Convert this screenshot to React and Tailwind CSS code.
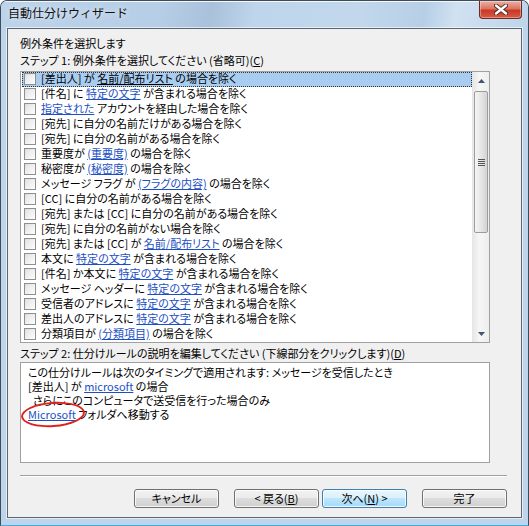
import React from 'react';

const font = '[font-family:"Noto_Sans_CJK_JP","Noto_Sans",sans-serif] [font-feature-settings:"palt"]';

// exception rules shown in the list
const rules = [
  ['[差出人] が ', { link: '名前/配布リスト' }, ' の場合を除く'],
  ['[件名] に ', { link: '特定の文字' }, ' が含まれる場合を除く'],
  [{ link: '指定された' }, ' アカウントを経由した場合を除く'],
  ['[宛先] に自分の名前だけがある場合を除く'],
  ['[宛先] に自分の名前がある場合を除く'],
  ['重要度が ', { link: '(重要度)' }, ' の場合を除く'],
  ['秘密度が ', { link: '(秘密度)' }, ' の場合を除く'],
  ['メッセージ フラグ が ', { link: '(フラグの内容)' }, ' の場合を除く'],
  ['[CC] に自分の名前がある場合を除く'],
  ['[宛先] または [CC] に自分の名前がある場合を除く'],
  ['[宛先] に自分の名前がない場合を除く'],
  ['[宛先] または [CC] が ', { link: '名前/配布リスト' }, ' の場合を除く'],
  ['本文に ', { link: '特定の文字' }, ' が含まれる場合を除く'],
  ['[件名] か本文に ', { link: '特定の文字' }, ' が含まれる場合を除く'],
  ['メッセージ ヘッダーに ', { link: '特定の文字' }, ' が含まれる場合を除く'],
  ['受信者のアドレスに ', { link: '特定の文字' }, ' が含まれる場合を除く'],
  ['差出人のアドレスに ', { link: '特定の文字' }, ' が含まれる場合を除く'],
  ['分類項目が ', { link: '(分類項目)' }, ' の場合を除く'],
];

const Checkbox = () => (
  <span className="mt-[1px] ml-[2px] h-[12px] w-[12px] shrink-0 border border-[#8e8f8f] bg-[linear-gradient(135deg,#dcdcdc,#f4f4f4_60%,#ffffff)] p-[1px]">
    <span className="block h-full w-full bg-[linear-gradient(135deg,#e6e6e6,#fafafa)]" />
  </span>
);

const RuleRow = ({ parts, selected }) => (
  <div className="flex h-[15px] items-start">
    <div
      className={`ml-[1px] flex h-[15px] w-[450px] items-start ${
        selected ? 'bg-[#a9cdf1] outline outline-1 -outline-offset-1 outline-dotted outline-[#333]' : ''
      }`}
    >
      <Checkbox />
      <span className="ml-[5px] -mt-[1px] whitespace-pre text-[11px] leading-[15px] text-black">
        {parts.map((p, i) =>
          typeof p === 'string' ? (
            <span key={i}>{p}</span>
          ) : (
            <span key={i} className={`underline ${selected ? 'text-black' : 'text-[#1c4fc4]'}`}>
              {p.link}
            </span>
          )
        )}
      </span>
    </div>
  </div>
);

const Arrow = ({ down }) => (
  <svg width="7" height="4" viewBox="0 0 7 4">
    <path d={down ? 'M0 0 H7 L3.5 4 Z' : 'M0 4 H7 L3.5 0 Z'} fill="#44546a" />
  </svg>
);

const Scrollbar = () => (
  <div className="flex w-[17px] flex-col border-l border-[#e6e6e6] bg-[linear-gradient(90deg,#e8e8e8,#f6f6f6_40%,#eeeeee)]">
    <div className="flex h-[18px] items-center justify-center">
      <Arrow />
    </div>
    <div className="mx-[1px] mt-[1px] flex h-[142px] items-center justify-center rounded-[2px] border border-[#9c9c9c] bg-[linear-gradient(90deg,#f5f5f5,#e6e6e6_50%,#d3d3d3)]">
      <div className="flex flex-col gap-[1px]">
        {[0, 1, 2, 3].map((i) => (
          <div key={i} className="h-[1px] w-[7px] bg-[#555]" />
        ))}
      </div>
    </div>
    <div className="flex-1" />
    <div className="flex h-[17px] items-center justify-center">
      <Arrow down />
    </div>
  </div>
);

const Button = ({ children, primary }) => (
  <button
    className={`flex h-[19px] w-[85px] items-center justify-center rounded-[3px] border text-[11px] leading-none text-black shadow-[inset_0_0_0_1px_rgba(255,255,255,0.8)] ${
      primary
        ? 'border-[#3c7fb1] bg-[linear-gradient(180deg,#eaf6fd,#d9f0fc_50%,#bee6fd_50%,#a7d9f5)]'
        : 'border-[#707070] bg-[linear-gradient(180deg,#f2f2f2,#ebebeb_50%,#dddddd_50%,#cfcfcf)]'
    }`}
  >
    {children}
  </button>
);

const CloseIcon = () => (
  <svg width="14" height="11" viewBox="0 0 14 11">
    <path d="M2 1.5 L12 9.5 M12 1.5 L2 9.5" stroke="#4a2a24" strokeWidth="4.2" strokeLinecap="round" />
    <path d="M2 1.5 L12 9.5 M12 1.5 L2 9.5" stroke="#ffffff" strokeWidth="2.4" strokeLinecap="round" />
  </svg>
);

const App = () => {
  return (
    <div
      className={`${font} flex h-[526px] w-[529px] flex-col overflow-hidden rounded-t-[7px] border border-[#3e4c5a] border-b-[#3bb0de] bg-[#bed4ea] text-black`}
    >
      {/* title bar */}
      <div className="flex h-[27px] items-start border-t border-[#f4f8fc] bg-[linear-gradient(100deg,#bcd3ea_0%,#b6cee6_30%,#a9c1da_40%,#bed5eb_48%,#c2d7ec_68%,#b7cfe6_80%,#d0e1f1_86%,#bed4ea_100%)]">
        <span className="ml-[7px] mt-[3px] text-[12px] leading-[16px] text-[#111] [font-feature-settings:normal] [text-shadow:0_0_6px_rgba(255,255,255,0.9)]">
          自動仕分けウィザード
        </span>
        <div className="ml-auto mr-[6px] -mt-[1px] flex h-[18px] w-[43px] items-center justify-center rounded-b-[4px] border border-t-0 border-[#6e2a22] bg-[linear-gradient(180deg,#eeb0a2,#dc7462_45%,#c63a27_55%,#da5a44)] shadow-[inset_0_0_0_1px_rgba(255,255,255,0.35)]">
          <CloseIcon />
        </div>
      </div>

      {/* client area */}
      <div className="mx-[6px] mb-[7px] flex flex-1 flex-col border border-[#5b6671] bg-[#f0f0f0] pl-[12px] pt-[7px] shadow-[0_0_0_1px_rgba(255,255,255,0.6)]">
        <div className="h-[15px] text-[11px] leading-[15px]">例外条件を選択します</div>
        <div className="mt-[2px] h-[15px] text-[11px] leading-[15px]">
          ステップ 1: 例外条件を選択してください (省略可)(<span className="underline">C</span>)
        </div>

        <div className="mt-[3px] flex h-[272px] w-[470px] border border-[#a0a0a0] bg-white">
          <div className="h-[270px] flex-1 [clip-path:inset(-4px_0_0_0)]">
            {rules.map((parts, i) => (
              <RuleRow key={i} parts={parts} selected={i === 0} />
            ))}
          </div>
          <Scrollbar />
        </div>

        <div className="mt-[3px] h-[15px] text-[11px] leading-[15px]">
          ステップ 2: 仕分けルールの説明を編集してください (下線部分をクリックします)(<span className="underline">D</span>)
        </div>

        <div className="relative mt-[1px] h-[101px] w-[470px] border border-[#a0a0a0] bg-white pl-[7px] pt-[2px] text-[11px] leading-[14px]">
          <div>この仕分けルールは次のタイミングで適用されます: メッセージを受信したとき</div>
          <div>
            [差出人] が <span className="text-[#1c4fc4] underline">microsoft</span> の場合
          </div>
          <div className="pl-[5px]">さらにこのコンピュータで送受信を行った場合のみ</div>
          <div>
            <span className="text-[#1c4fc4] underline">Microsoft</span> フォルダへ移動する
          </div>
          {/* red annotation ellipse */}
          <div className="absolute left-[0px] top-[39px] h-[25px] w-[64px] -rotate-[4deg] rounded-[50%] border-2 border-[#e0201c]" />
        </div>

        <div className="mt-[12px] h-[2px] w-[487px] border-t border-b border-t-[#a0a0a0] border-b-white" />

        <div className="mt-[12px] flex w-[487px] justify-end">
          <Button>キャンセル</Button>
          <div className="ml-[15px]">
            <Button>
              &lt; 戻る(<span className="underline">B</span>)
            </Button>
          </div>
          <div className="ml-[3px]">
            <Button primary>
              次へ(<span className="underline">N</span>) &gt;
            </Button>
          </div>
          <div className="ml-[15px]">
            <Button>完了</Button>
          </div>
        </div>
      </div>
    </div>
  );
};

export default App;
